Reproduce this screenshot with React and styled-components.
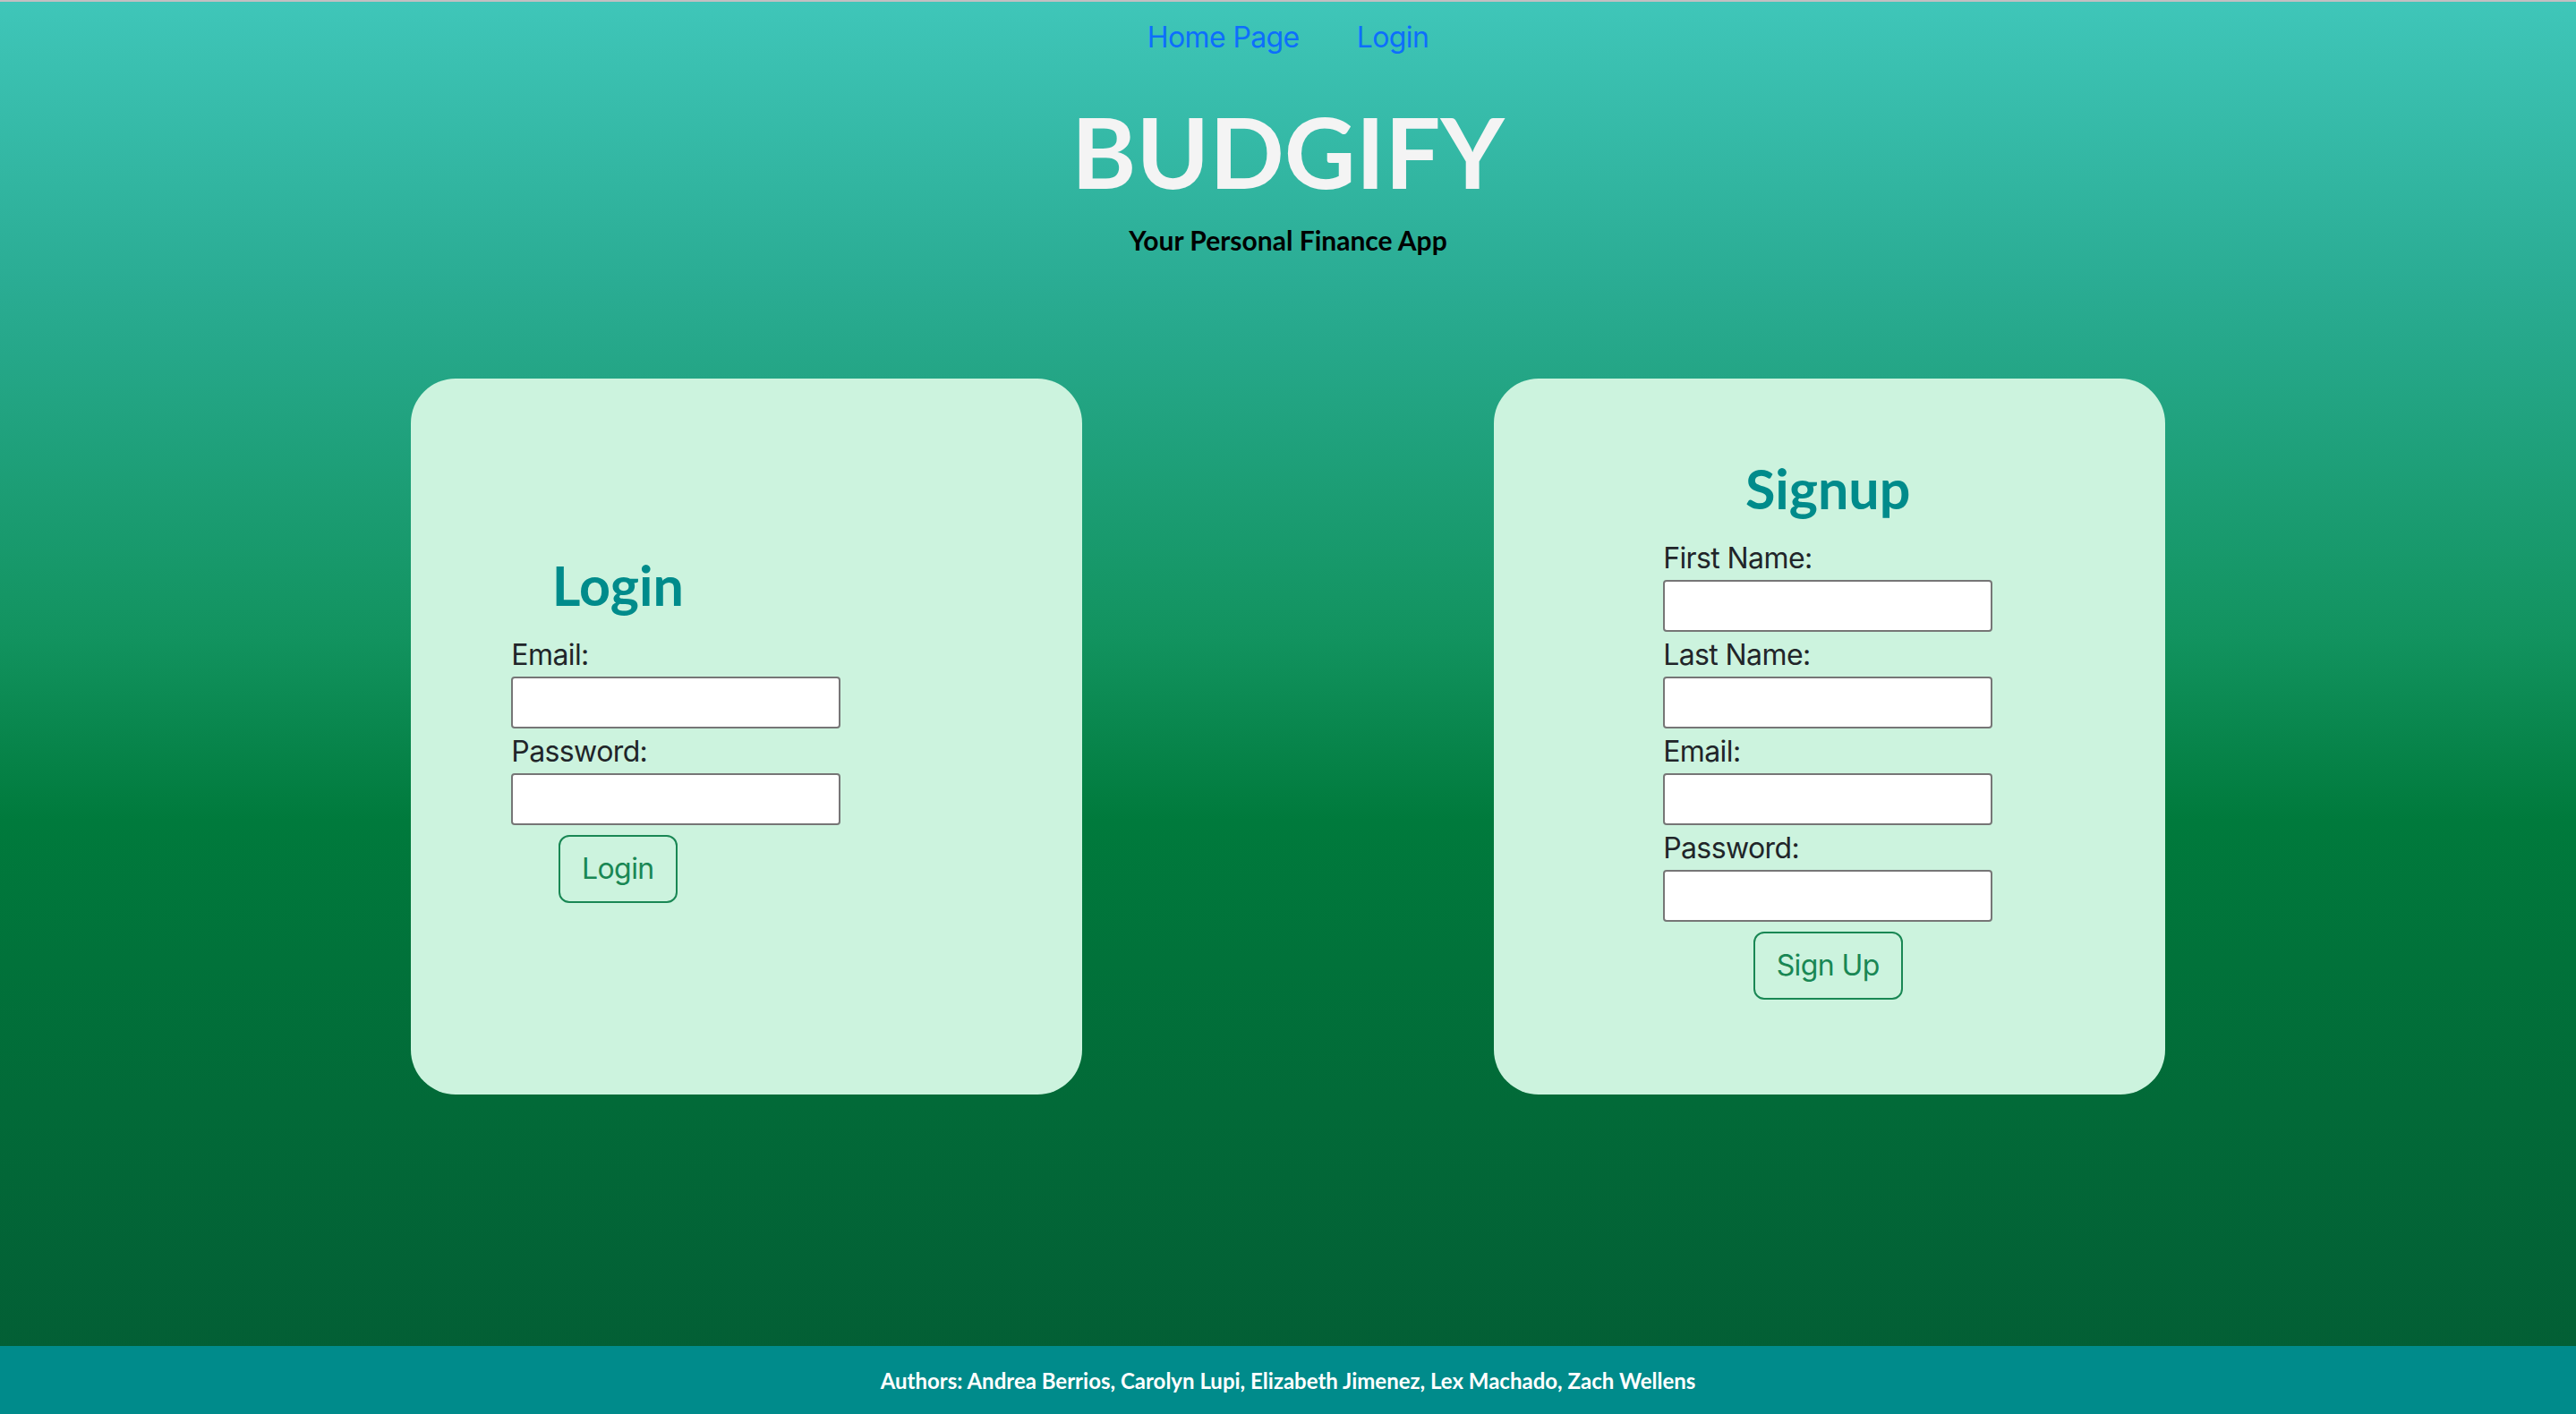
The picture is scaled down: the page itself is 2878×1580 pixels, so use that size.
import React from "react";
import styled, { createGlobalStyle } from "styled-components";

const GlobalStyle = createGlobalStyle`
  * { box-sizing: border-box; }
  html, body { margin: 0; padding: 0; }
  body {
    font-family: Inter, "Noto Sans", "Liberation Sans", sans-serif;
    color: #212529;
  }
`;

const Page = styled.div`
  min-height: 100vh;
  display: flex;
  flex-direction: column;
  border-top: 2px solid #c3bfc2;
  background: linear-gradient(
    to bottom,
    #3fc6b9 0%,
    #2aac93 20%,
    #12935f 45%,
    #007a3c 58%,
    #026a38 78%,
    #035c34 100%
  );
`;

const Nav = styled.nav`
  display: flex;
  justify-content: center;
`;

const NavLink = styled.a`
  display: block;
  padding: 16px 32px;
  font-size: 32px;
  line-height: 48px;
  color: #0d6efd;
  text-decoration: none;
  letter-spacing: -0.6px;
`;

const Header = styled.header`
  display: flex;
  flex-direction: column;
  align-items: center;
`;

const Title = styled.h1`
  margin: 18px 0 0;
  font-family: Lato, "Open Sans", sans-serif;
  font-weight: 700;
  font-size: 110px;
  line-height: 137px;
  color: #f4f4f4;
`;

const Subtitle = styled.p`
  margin: 12px 0 0;
  font-family: Lato, "Open Sans", sans-serif;
  font-weight: 700;
  font-size: 30px;
  line-height: 38px;
  color: #000;
`;

const Main = styled.main`
  display: flex;
  justify-content: space-evenly;
  padding-top: 136px;
`;

const Card = styled.section`
  width: 750px;
  height: 800px;
  border-radius: 50px;
  background: #ccf3de;
  display: flex;
  flex-direction: column;
  justify-content: center;
  align-items: ${(p) => (p.$offset ? "flex-start" : "center")};
  padding-left: ${(p) => (p.$offset ? `${p.$offset}px` : "0")};
  padding-bottom: 22px;
`;

const Form = styled.form`
  display: flex;
  flex-direction: column;
  align-items: center;
  width: ${(p) => (p.$width ? `${p.$width}px` : "auto")};
  margin-left: ${(p) => (p.$shift ? `${p.$shift}px` : "0")};
`;

const CardTitle = styled.h2`
  margin: 0 0 16px;
  font-family: Lato, "Open Sans", sans-serif;
  font-weight: 700;
  font-size: 61px;
  line-height: 77px;
  color: #008b8b;
`;

const Fields = styled.div`
  align-self: flex-start;
  width: 368px;
  flex-shrink: 0;
  display: flex;
  flex-direction: column;
`;

const Label = styled.label`
  display: block;
  font-size: 32px;
  line-height: 48px;
  height: 48px;
  color: #212529;
  letter-spacing: -0.6px;
`;

const Input = styled.input`
  display: block;
  width: 368px;
  height: 58px;
  margin: 0 0 2px;
  border: 2px solid #767676;
  border-radius: 4px;
  background: #fff;
  font-size: 28px;
`;

const Button = styled.button`
  margin-top: 9px;
  padding: 12px 24px;
  font-family: Inter, "Noto Sans", sans-serif;
  font-size: 32px;
  line-height: 48px;
  letter-spacing: -0.6px;
  color: #198754;
  background: transparent;
  border: 2px solid #198754;
  border-radius: 12px;
  cursor: pointer;
`;

const Footer = styled.footer`
  margin-top: auto;
  height: 76px;
  background: #008b8b;
  display: flex;
  align-items: center;
  justify-content: center;
  font-family: Lato, "Open Sans", sans-serif;
  font-weight: 700;
  font-size: 24px;
  color: #fff;
`;

function Field({ label, type = "text" }) {
  return (
    <>
      <Label>{label}</Label>
      <Input type={type} />
    </>
  );
}

export default function App() {
  return (
    <>
      <GlobalStyle />
      <Page>
        <Nav>
          <NavLink href="#">Home Page</NavLink>
          <NavLink href="#">Login</NavLink>
        </Nav>
        <Header>
          <Title>BUDGIFY</Title>
          <Subtitle>Your Personal Finance App</Subtitle>
        </Header>
        <Main>
          <Card $offset={112}>
            <Form $width={238} onSubmit={(e) => e.preventDefault()}>
              <CardTitle>Login</CardTitle>
              <Fields>
                <Field label="Email:" type="email" />
                <Field label="Password:" type="password" />
              </Fields>
              <Button type="submit">Login</Button>
            </Form>
          </Card>
          <Card>
            <Form $shift={-3} onSubmit={(e) => e.preventDefault()}>
              <CardTitle>Signup</CardTitle>
              <Fields>
                <Field label="First Name:" />
                <Field label="Last Name:" />
                <Field label="Email:" type="email" />
                <Field label="Password:" type="password" />
              </Fields>
              <Button type="submit">Sign Up</Button>
            </Form>
          </Card>
        </Main>
        <Footer>
          Authors: Andrea Berrios, Carolyn Lupi, Elizabeth Jimenez, Lex Machado, Zach Wellens
        </Footer>
      </Page>
    </>
  );
}
